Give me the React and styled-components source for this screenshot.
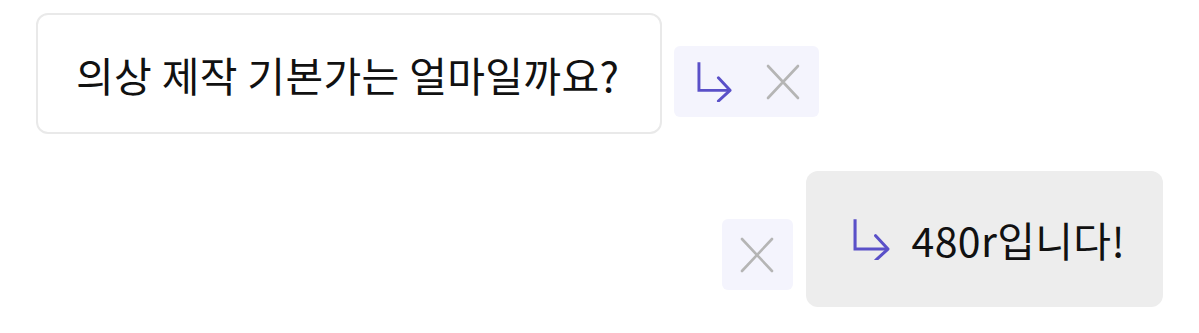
import React from "react";
import styled, { createGlobalStyle } from "styled-components";

const GlobalStyle = createGlobalStyle`
  body {
    margin: 0;
    background: #ffffff;
    font-family: "Noto Sans CJK KR", "Noto Sans", sans-serif;
  }
`;

const Page = styled.div`
  display: flex;
  flex-direction: column;
  gap: 37px;
  padding: 13px 36px 0 36px;
`;

const Row = styled.div`
  display: flex;
  justify-content: ${(p) => (p.$mine ? "flex-end" : "flex-start")};
  align-items: ${(p) => (p.$mine ? "flex-end" : "flex-start")};
  gap: ${(p) => (p.$mine ? "13px" : "12px")};
`;

const Bubble = styled.div`
  box-sizing: border-box;
  display: flex;
  align-items: center;
  gap: 22px;
  height: ${(p) => (p.$mine ? "136px" : "121px")};
  padding: ${(p) => (p.$mine ? "0 38px 0 47px" : "0 41px 0 38px")};
  border-radius: 12px;
  background: ${(p) => (p.$mine ? "#ededed" : "#ffffff")};
  border: ${(p) => (p.$mine ? "none" : "2px solid #e9e9e9")};
  font-size: 41px;
  letter-spacing: 0.35px;
  color: #111111;
  white-space: nowrap;
`;

const Actions = styled.div`
  display: flex;
  align-items: center;
  justify-content: center;
  gap: 34px;
  height: 71px;
  padding: ${(p) => (p.$single ? "0" : "0 19px 0 23px")};
  width: ${(p) => (p.$single ? "71px" : "auto")};
  box-sizing: border-box;
  border-radius: 6px;
  background: #f4f4fd;
  margin-top: ${(p) => (p.$single ? "0" : "33px")};
  margin-bottom: ${(p) => (p.$single ? "17px" : "0")};
`;

const ReplyIcon = ({ size = 36 }) => (
  <svg width={size} height={size * 1.15} viewBox="0 0 36 41" fill="none">
    <path
      d="M2 1 V30 H33"
      stroke="#5a50c8"
      strokeWidth="3"
      strokeLinejoin="miter"
    />
    <path
      d="M22 17 L34 30 L22 41"
      stroke="#5a50c8"
      strokeWidth="3"
      strokeLinecap="round"
      strokeLinejoin="round"
    />
  </svg>
);

const CloseIcon = () => (
  <svg width="34" height="36" viewBox="0 0 34 36" fill="none">
    <path
      d="M2 2 L32 34 M32 2 L2 34"
      stroke="#b5b5b5"
      strokeWidth="2.6"
      strokeLinecap="round"
    />
  </svg>
);

export default function App() {
  return (
    <>
      <GlobalStyle />
      <Page>
        <Row>
          <Bubble>의상 제작 기본가는 얼마일까요?</Bubble>
          <Actions>
            <ReplyIcon size={35} />
            <CloseIcon />
          </Actions>
        </Row>
        <Row $mine>
          <Actions $single>
            <CloseIcon />
          </Actions>
          <Bubble $mine>
            <ReplyIcon size={37} />
            480r입니다!
          </Bubble>
        </Row>
      </Page>
    </>
  );
}
